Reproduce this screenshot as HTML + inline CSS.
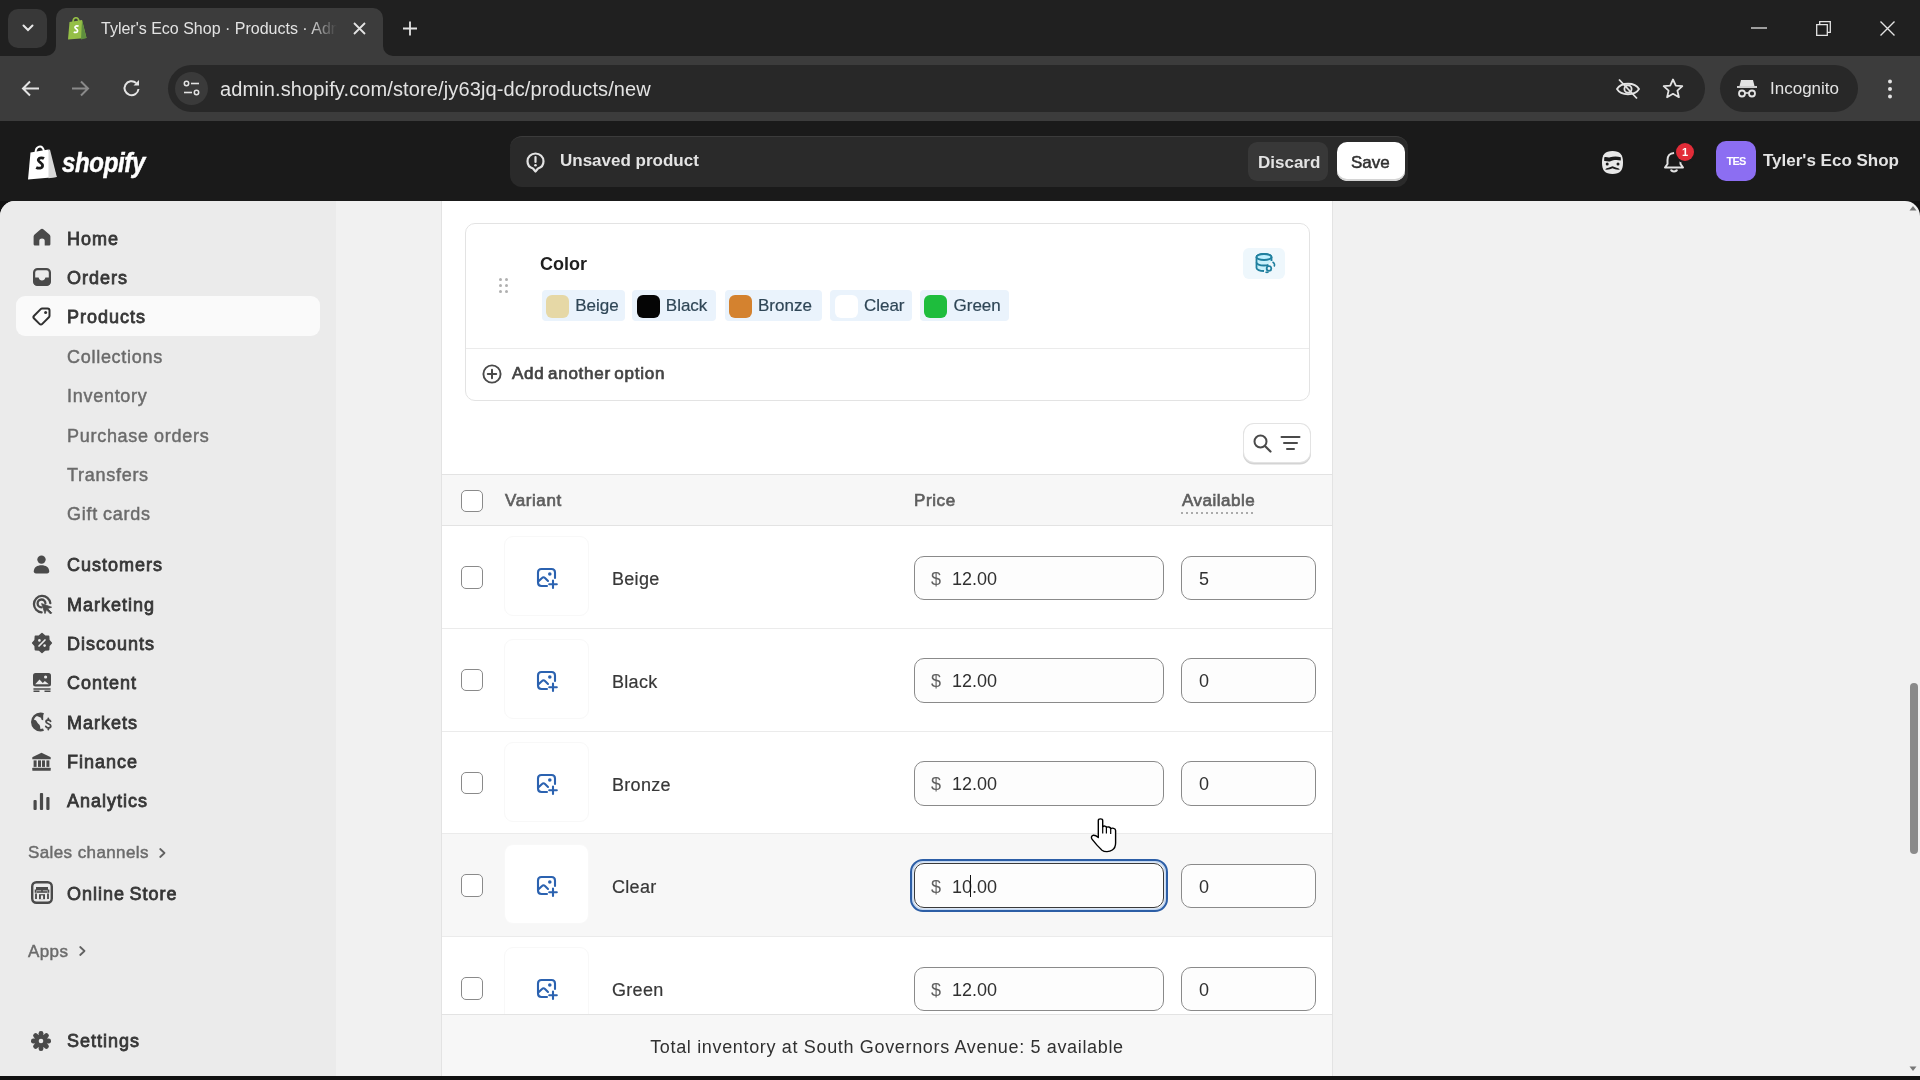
<!DOCTYPE html>
<html><head><meta charset="utf-8">
<style>
*{box-sizing:border-box;margin:0;padding:0}
html,body{width:1920px;height:1080px;overflow:hidden;background:#111;font-family:"Liberation Sans",sans-serif;-webkit-font-smoothing:antialiased}
.a{position:absolute}
#root{position:absolute;left:0;top:0;width:1920px;height:1080px;will-change:transform;overflow:hidden}
svg{position:absolute;overflow:visible}
.wt{position:absolute;color:#e3e3e3;white-space:nowrap}
#tabstrip{left:0;top:0;width:1920px;height:56px;background:#202020}
#toolbar{left:0;top:56px;width:1920px;height:65px;background:#3c3c3c}
#tab{left:56px;top:8px;width:327px;height:48px;background:#3c3c3c;border-radius:10px 10px 0 0}
#omni{left:168px;top:65px;width:1537px;height:47px;background:#282828;border-radius:24px}
#incog{left:1720px;top:65px;width:138px;height:47px;background:#282828;border-radius:24px}
#top{left:0;top:121px;width:1920px;height:80px;background:#1a1a1a}
#unsaved{left:510px;top:136px;width:898px;height:51px;background:#2a2a2a;border-radius:12px;border-top:1.5px solid #3b3b3b}
#body{left:0;top:201px;width:1920px;height:875px;background:#f1f1f1;border-radius:15px 15px 0 0;overflow:hidden}
#side{left:0;top:0;width:336px;height:875px;background:#ebebeb}
.nav{position:absolute;left:67px;font-size:18px;font-weight:400;color:#363636;white-space:nowrap;line-height:20px;letter-spacing:1px;word-spacing:-1.5px;-webkit-text-stroke:0.8px #363636}
.sub{color:#6b6b6b;font-weight:400;letter-spacing:0.72px;word-spacing:-0.5px;-webkit-text-stroke:0.45px #6b6b6b}
.sec{position:absolute;left:28px;font-size:17px;font-weight:400;color:#6b6b6b;white-space:nowrap;line-height:20px;letter-spacing:0.4px;-webkit-text-stroke:0.45px #6b6b6b}
.ico{position:absolute;left:31px;width:22px;height:22px}
#card{left:441px;top:0;width:892px;height:875px;background:#fff;border-left:1px solid #e3e3e3;border-right:1px solid #e3e3e3}
</style></head><body><div id="root">
<!-- ============ CHROME ============ -->
<div id="tabstrip" class="a"></div>
<div class="a" style="left:8px;top:9px;width:39px;height:39px;background:#383838;border-radius:10px"></div>
<svg style="left:20px;top:22px" width="16" height="12"><path d="M3.5 3.5 L8 8 L12.5 3.5" stroke="#e8e8e8" stroke-width="2" fill="none" stroke-linecap="round"/></svg>
<div id="tab" class="a"></div>
<svg style="left:46px;top:46px" width="10" height="10"><path d="M10 0 V10 H0 A10 10 0 0 0 10 0Z" fill="#3c3c3c"/></svg>
<svg style="left:383px;top:46px" width="10" height="10"><path d="M0 0 V10 H10 A10 10 0 0 1 0 0Z" fill="#3c3c3c"/></svg>
<!-- favicon -->
<svg style="left:67px;top:16px" width="21" height="24" viewBox="0 0 21 24"><path d="M2.5 6 L15 4 L19.5 22 L1 23.5 Z" fill="#95bf47"/><path d="M15 4 L19.5 22 L14 23.5 Z" fill="#5e8e3e"/><path d="M6 6 C6 1 11 0 12 5" stroke="#95bf47" stroke-width="1.6" fill="none"/><path d="M11.6 10.3c-.9-.5-2.8-.6-3.6.6-.9 1.4 2.8 2.2 2.6 4.1-.2 1.6-2.4 1.7-3.9 1" stroke="#fff" stroke-width="1.7" fill="none"/></svg>
<div class="wt" style="left:101px;top:18px;font-size:16px;line-height:22px;width:240px;overflow:hidden;letter-spacing:0px;-webkit-mask-image:linear-gradient(90deg,#000 208px,transparent 236px)">Tyler's Eco Shop · Products · Admin</div>
<svg style="left:353px;top:22px" width="13" height="13"><path d="M1 1 L12 12 M12 1 L1 12" stroke="#e3e3e3" stroke-width="1.8"/></svg>
<svg style="left:402px;top:21px" width="16" height="15"><path d="M8 0.5 V14.5 M1 7.5 H15" stroke="#e3e3e3" stroke-width="1.8"/></svg>
<!-- window controls -->
<svg style="left:1751px;top:27px" width="16" height="2"><path d="M0 1 H16" stroke="#e3e3e3" stroke-width="1.3"/></svg>
<svg style="left:1816px;top:21px" width="15" height="15"><path d="M0.7 3.7 H11.3 V14.3 H0.7 Z" stroke="#e3e3e3" stroke-width="1.3" fill="none"/><path d="M3.7 3.7 V0.7 H14.3 V11.3 H11.3" stroke="#e3e3e3" stroke-width="1.3" fill="none"/></svg>
<svg style="left:1880px;top:21px" width="15" height="15"><path d="M0.5 0.5 L14.5 14.5 M14.5 0.5 L0.5 14.5" stroke="#e3e3e3" stroke-width="1.4"/></svg>
<div id="toolbar" class="a"></div>
<!-- nav buttons -->
<svg style="left:21px;top:80px" width="19" height="17"><path d="M18 8.5 H2 M9 1.5 L2 8.5 L9 15.5" stroke="#e3e3e3" stroke-width="2" fill="none"/></svg>
<svg style="left:71px;top:80px" width="19" height="17"><path d="M1 8.5 H17 M10 1.5 L17 8.5 L10 15.5" stroke="#8a8a8a" stroke-width="2" fill="none"/></svg>
<svg style="left:122px;top:79px" width="20" height="19"><path d="M16.5 10 A7 7 0 1 1 14.2 4" stroke="#e3e3e3" stroke-width="2" fill="none"/><path d="M17 1 V6.5 H11.5 Z" fill="#e3e3e3"/></svg>
<div id="omni" class="a"></div>
<div class="a" style="left:175px;top:72px;width:33px;height:33px;border-radius:50%;background:#3a3a3a"></div>
<svg style="left:183px;top:80px" width="18" height="17"><circle cx="3.5" cy="3.5" r="2.2" stroke="#e3e3e3" stroke-width="1.5" fill="none"/><path d="M8 3.5 H16" stroke="#e3e3e3" stroke-width="1.6"/><circle cx="13.5" cy="12.5" r="2.2" stroke="#e3e3e3" stroke-width="1.5" fill="none"/><path d="M1 12.5 H9" stroke="#e3e3e3" stroke-width="1.6"/></svg>
<div class="wt" style="left:220px;top:77px;font-size:20px;line-height:24px;letter-spacing:0.12px">admin.shopify.com/store/jy63jq-dc/products/new</div>
<!-- eye slash -->
<svg style="left:1615px;top:78px" width="26" height="22"><path d="M2 11 C6 4 20 4 24 11 C20 18 6 18 2 11Z" stroke="#e3e3e3" stroke-width="1.8" fill="none"/><circle cx="13" cy="11" r="3.6" stroke="#e3e3e3" stroke-width="1.8" fill="none"/><path d="M4 1.5 L22 20.5" stroke="#e3e3e3" stroke-width="1.8"/></svg>
<svg style="left:1662px;top:78px" width="22" height="21"><path d="M11 1.5 L13.8 7.6 L20.3 8.2 L15.4 12.6 L16.9 19.2 L11 15.8 L5.1 19.2 L6.6 12.6 L1.7 8.2 L8.2 7.6Z" stroke="#e3e3e3" stroke-width="1.8" fill="none" stroke-linejoin="round"/></svg>
<div id="incog" class="a"></div>
<svg style="left:1736px;top:78px" width="22" height="20"><path d="M5 2 L17 2 L18.5 8 H3.5Z" fill="#e3e3e3"/><path d="M1 9 H21" stroke="#e3e3e3" stroke-width="1.8"/><circle cx="6" cy="15.5" r="3" stroke="#e3e3e3" stroke-width="1.8" fill="none"/><circle cx="16" cy="15.5" r="3" stroke="#e3e3e3" stroke-width="1.8" fill="none"/><path d="M9 15 H13" stroke="#e3e3e3" stroke-width="1.6"/></svg>
<div class="wt" style="left:1770px;top:78px;font-size:17px;line-height:22px">Incognito</div>
<svg style="left:1887px;top:79px" width="6" height="20"><circle cx="3" cy="2.5" r="2" fill="#e3e3e3"/><circle cx="3" cy="10" r="2" fill="#e3e3e3"/><circle cx="3" cy="17.5" r="2" fill="#e3e3e3"/></svg>

<!-- ============ SHOPIFY TOP BAR ============ -->
<div id="top" class="a"></div>
<svg style="left:27px;top:144px" width="31" height="36" viewBox="0 0 31 36"><path d="M3.5 8.5 L21.5 5.5 L29.5 33 L1 35.5 Z" fill="#fff"/><path d="M21.5 5.5 L23 5.8 L29.8 33 L21.5 34.2Z" fill="#d9d9d9"/><path d="M8.5 9 C8.5 2 15 0 17 7" stroke="#fff" stroke-width="2" fill="none"/><path d="M17 14.5c-1.2-.8-4.6-1.2-5.6.8-1.2 2.6 4.6 3.4 4.2 6.6-.3 2.6-4 2.8-6.4 1.5" stroke="#1a1a1a" stroke-width="2.8" fill="none"/></svg>
<div class="a" style="left:61.5px;top:144.5px;font-size:27px;font-weight:700;font-style:italic;color:#fff;line-height:36px;transform:scaleX(0.89);transform-origin:0 0;letter-spacing:-0.4px;-webkit-text-stroke:0.5px #fff">shopify</div>
<div id="unsaved" class="a"></div>
<svg style="left:526px;top:152px" width="19" height="21" viewBox="0 0 19 21"><path d="M9.5 1.5 C5 1.5 1.5 4.8 1.5 9.2 C1.5 12.8 3.8 15.5 7 16.5 L9.5 19.5 L12 16.5 C15.2 15.5 17.5 12.8 17.5 9.2 C17.5 4.8 14 1.5 9.5 1.5Z" stroke="#e3e3e3" stroke-width="2.2" fill="none" stroke-linejoin="round"/><path d="M9.5 5 V10" stroke="#e3e3e3" stroke-width="2.2" stroke-linecap="round"/><circle cx="9.5" cy="13.2" r="1.3" fill="#e3e3e3"/></svg>
<div class="wt" style="left:560px;top:151px;font-size:17px;font-weight:700;line-height:20px;color:#e3e3e3">Unsaved product</div>
<div class="a" style="left:1248px;top:142px;width:80px;height:39px;background:#383838;border-radius:9px"></div>
<div class="wt" style="left:1258px;top:153px;font-size:17px;font-weight:700;line-height:20px;color:#e3e3e3">Discard</div>
<div class="a" style="left:1337px;top:142px;width:68px;height:39px;background:#fff;border-radius:10px;box-shadow:0 0 0 2px #2a2a2a, inset 0 -2px 0 #d4d4d4"></div>
<div class="a" style="left:1351px;top:153px;font-size:17px;font-weight:400;line-height:20px;color:#303030;-webkit-text-stroke:0.5px #303030">Save</div>
<!-- incognito face -->
<svg style="left:1601px;top:149.5px" width="23" height="25" viewBox="0 0 23 25"><path d="M11.5 1 C4 1 1 4.5 1 12.5 C1 20.5 4 24 11.5 24 C19 24 22 20.5 22 12.5 C22 4.5 19 1 11.5 1Z" fill="#e8e8e8"/><path d="M3.2 7.5 C5 6.2 7 8 9 7.3 C12 6.3 16 6 19.8 7.3 L19.8 10.5 C16 9.5 12 10 9.5 11.2 C7 12 5 10.5 3.2 11Z" fill="#1a1a1a"/><circle cx="6.2" cy="14" r="1.5" fill="#1a1a1a"/><circle cx="17" cy="14" r="1.5" fill="#1a1a1a"/><path d="M4 19.5 C6 17.5 9 17.5 11.5 16.2 C14 17.5 17 17.5 19 19.5 C16 20 13.5 19 11.5 18.3 C9.5 19 7 20 4 19.5Z" fill="#1a1a1a"/></svg>
<!-- bell -->
<svg style="left:1663px;top:151px" width="22" height="23" viewBox="0 0 22 23"><path d="M11 2 C6.5 2 4.5 5.5 4.5 9 V13 L2 16.5 H20 L17.5 13 V9 C17.5 5.5 15.5 2 11 2Z" stroke="#e3e3e3" stroke-width="2" fill="none" stroke-linejoin="round"/><path d="M8 18.5 C8.5 21 13.5 21 14 18.5" stroke="#e3e3e3" stroke-width="2" fill="none"/></svg>
<div class="a" style="left:1676px;top:143px;width:18px;height:18px;border-radius:50%;background:#e22c38;box-shadow:0 0 0 2px #1a1a1a"></div>
<div class="a" style="left:1676px;top:144px;width:18px;text-align:center;font-size:11px;font-weight:700;color:#fff;line-height:16px">1</div>
<div class="a" style="left:1716px;top:141px;width:40px;height:40px;background:#8c6ef2;border-radius:10px"></div>
<div class="a" style="left:1716px;top:154px;width:40px;text-align:center;font-size:11px;font-weight:700;color:#fff;line-height:14px;letter-spacing:-0.8px">TES</div>
<div class="wt" style="left:1763px;top:151px;font-size:17px;font-weight:700;line-height:20px;color:#e3e3e3">Tyler's Eco Shop</div>

<!-- ============ BODY ============ -->
<div id="body" class="a">
<div id="side" class="a">
<div class="a" style="left:16px;top:95px;width:304px;height:40px;background:#fafafa;border-radius:9px"></div>
<div class="nav" style="top:27.5px">Home</div>
<div class="nav" style="top:66.89px">Orders</div>
<div class="nav" style="top:106.3px">Products</div>
<div class="nav sub" style="top:145.8px">Collections</div>
<div class="nav sub" style="top:185.19px">Inventory</div>
<div class="nav sub" style="top:224.6px">Purchase orders</div>
<div class="nav sub" style="top:264.0px">Transfers</div>
<div class="nav sub" style="top:303.39px">Gift cards</div>
<div class="nav" style="top:354.1px">Customers</div>
<div class="nav" style="top:393.5px">Marketing</div>
<div class="nav" style="top:433.0px">Discounts</div>
<div class="nav" style="top:472.29px">Content</div>
<div class="nav" style="top:511.79px">Markets</div>
<div class="nav" style="top:551.0px">Finance</div>
<div class="nav" style="top:590.1px">Analytics</div>
<div class="nav" style="top:683.2px">Online Store</div>
<div class="nav" style="top:830.29px">Settings</div>
<div class="sec" style="top:642.37px">Sales channels</div>
<div class="sec" style="top:740.67px">Apps</div>
<svg style="left:33px;top:27.0px" width="18" height="18" viewBox="0 0 18 18"><path d="M9 0.8 C8.4 0.8 7.9 1.1 7.4 1.5 L1.6 6.4 C1 6.9 0.6 7.6 0.6 8.5 V16 C0.6 17 1.4 17.6 2.3 17.6 H6.3 V12.6 C6.3 11.3 7.5 10.4 9 10.4 C10.5 10.4 11.7 11.3 11.7 12.6 V17.6 H15.7 C16.6 17.6 17.4 17 17.4 16 V8.5 C17.4 7.6 17 6.9 16.4 6.4 L10.6 1.5 C10.1 1.1 9.6 0.8 9 0.8Z" fill="#4a4a4a"/></svg>
<svg style="left:33px;top:67.0px" width="18" height="18" viewBox="0 0 18 18"><rect x="1.1" y="1.1" width="15.8" height="15.8" rx="3.5" stroke="#4a4a4a" stroke-width="2.2" fill="none"/><path d="M0.5 9.6 H5.6 C6 11.6 7.3 12.6 9 12.6 C10.7 12.6 12 11.6 12.4 9.6 H17.5 V14 C17.5 16.2 16.2 17.5 14 17.5 H4 C1.8 17.5 0.5 16.2 0.5 14Z" fill="#4a4a4a"/></svg>
<svg style="left:32px;top:106.0px" width="19" height="19" viewBox="0 0 19 19"><path d="M10.2 1.5 H15.5 C16.6 1.5 17.5 2.4 17.5 3.5 V8.8 C17.5 9.4 17.3 9.9 16.9 10.3 L10.3 16.9 C9.5 17.7 8.3 17.7 7.5 16.9 L2.1 11.5 C1.3 10.7 1.3 9.5 2.1 8.7 L8.7 2.1 C9.1 1.7 9.6 1.5 10.2 1.5Z" stroke="#303030" stroke-width="2" fill="none"/><circle cx="13.6" cy="5.4" r="1.5" fill="#303030"/></svg>
<svg style="left:33px;top:353.5px" width="17" height="19" viewBox="0 0 17 19"><circle cx="8.5" cy="4.6" r="4.2" fill="#4a4a4a"/><path d="M0.8 16.3 C0.8 12.2 4.2 10.2 8.5 10.2 C12.8 10.2 16.2 12.2 16.2 16.3 C16.2 17.6 15.5 18.5 14 18.5 H3 C1.5 18.5 0.8 17.6 0.8 16.3Z" fill="#4a4a4a"/></svg>
<svg style="left:32px;top:392.5px" width="21" height="21" viewBox="0 0 21 21"><path d="M18.3 9.2 A8.2 8.2 0 1 0 9.6 18.3" stroke="#4a4a4a" stroke-width="2.3" fill="none" stroke-linecap="round"/><path d="M13.4 9.3 A3.9 3.9 0 1 0 9.5 13.3" stroke="#4a4a4a" stroke-width="2.3" fill="none" stroke-linecap="round"/><path d="M9.6 9.6 L19.6 13.2 L15.6 14.6 L19.8 18.8 L18.6 20 L14.4 15.8 L13 19.6Z" fill="#4a4a4a" stroke="#4a4a4a" stroke-width="0.8" stroke-linejoin="round"/></svg>
<svg style="left:31.5px;top:432.0px" width="20" height="20" viewBox="0 0 20 20"><polygon points="10.00,0.70 12.83,3.16 16.58,3.42 16.84,7.17 19.30,10.00 16.84,12.83 16.58,16.58 12.83,16.84 10.00,19.30 7.17,16.84 3.42,16.58 3.16,12.83 0.70,10.00 3.16,7.17 3.42,3.42 7.17,3.16" fill="#4a4a4a" stroke="#4a4a4a" stroke-width="1.6" stroke-linejoin="round"/><path d="M7 13 L13 7" stroke="#ebebeb" stroke-width="1.7" stroke-linecap="round"/><circle cx="7.4" cy="7.4" r="1.3" fill="#ebebeb"/><circle cx="12.6" cy="12.6" r="1.3" fill="#ebebeb"/></svg>
<svg style="left:32px;top:471.0px" width="20" height="20" viewBox="0 0 20 20"><rect x="1" y="1" width="18" height="13.5" rx="2.5" fill="#4a4a4a"/><path d="M3.2 12.2 L7.5 7.6 L10.8 11 L12.8 9 L16.8 12.2Z" fill="#ebebeb"/><circle cx="13.6" cy="5" r="1.6" fill="#ebebeb"/><rect x="1.2" y="16.2" width="17.6" height="1.6" rx="0.8" fill="#4a4a4a"/><path d="M1.5 19.3 H7.5 M12.5 19.3 H18.5" stroke="#4a4a4a" stroke-width="1.4"/></svg>
<svg style="left:31px;top:511.0px" width="22" height="20" viewBox="0 0 22 20"><path d="M12.5 2.3 C11.6 1.9 10.6 1.7 9.5 1.7 C4.9 1.7 1.2 5.4 1.2 10 C1.2 14.6 4.9 18.3 9.5 18.3 C10.6 18.3 11.6 18.1 12.5 17.7" stroke="#4a4a4a" stroke-width="2.4" fill="none"/><path d="M2 8 C4 7 5.5 8.5 6 10 C6.5 11.8 8.5 12 9 14 L9.5 18 C6 18 2.5 15.5 1.8 11Z" fill="#4a4a4a"/><path d="M5 3 C6 4.5 8 4.5 9.5 5.5 C10.5 6.2 10 7.5 11 8 L12.2 8.2 V2.5 C10 1.6 7 1.8 5 3Z" fill="#4a4a4a"/><path d="M19.6 9.3 C19.2 8.4 18.4 8 17.3 8 C16 8 15 8.7 15 9.8 C15 12.2 19.8 11.3 19.8 13.9 C19.8 15.1 18.7 15.8 17.3 15.8 C16.1 15.8 15.2 15.3 14.8 14.4 M17.3 6.3 V8 M17.3 15.8 V17.6" stroke="#4a4a4a" stroke-width="1.8" fill="none" stroke-linecap="round"/></svg>
<svg style="left:32px;top:550.5px" width="19" height="19" viewBox="0 0 19 19"><path d="M9.5 0.8 L18.3 5 C18.6 5.2 18.7 5.5 18.7 5.8 V7.3 H0.3 V5.8 C0.3 5.5 0.4 5.2 0.7 5 Z" fill="#4a4a4a"/><rect x="1.6" y="8.4" width="3" height="6.5" fill="#4a4a4a"/><rect x="6" y="8.4" width="3" height="6.5" fill="#4a4a4a"/><rect x="10" y="8.4" width="3" height="6.5" fill="#4a4a4a"/><rect x="14.4" y="8.4" width="3" height="6.5" fill="#4a4a4a"/><rect x="0.3" y="15.8" width="18.4" height="3" rx="0.5" fill="#4a4a4a"/></svg>
<svg style="left:33px;top:590.5px" width="17" height="18" viewBox="0 0 17 18"><rect x="0.5" y="8" width="3.2" height="10" rx="1" fill="#4a4a4a"/><rect x="6.9" y="1" width="3.2" height="17" rx="1" fill="#4a4a4a"/><rect x="13.3" y="5" width="3.2" height="13" rx="1" fill="#4a4a4a"/></svg>
<svg style="left:31px;top:680.0px" width="22" height="23" viewBox="0 0 22 23"><rect x="1.2" y="1.2" width="19.6" height="20.6" rx="4.2" stroke="#4a4a4a" stroke-width="2.4" fill="none"/><path d="M5 6 H17 V9.5 H5Z" fill="#4a4a4a"/><path d="M4.5 8.5 V11.8 M17.5 8.5 V11.8 M11 8.5 V11" stroke="#4a4a4a" stroke-width="1.6"/><path d="M5.5 11 H16.5" stroke="#4a4a4a" stroke-width="1.6"/><path d="M5 12.5 V18 M17 12.5 V18" stroke="#4a4a4a" stroke-width="1.8"/><rect x="8" y="13.2" width="6" height="5" fill="#4a4a4a"/><rect x="9.9" y="14.4" width="2.2" height="3.8" fill="#ebebeb"/></svg>
<svg style="left:31px;top:829.7px" width="20" height="20" viewBox="0 0 20 20"><rect x="7.6" y="0" width="4.8" height="20" rx="2.2" fill="#4a4a4a" transform="rotate(0 10 10)"/><rect x="7.6" y="0" width="4.8" height="20" rx="2.2" fill="#4a4a4a" transform="rotate(45 10 10)"/><rect x="7.6" y="0" width="4.8" height="20" rx="2.2" fill="#4a4a4a" transform="rotate(90 10 10)"/><rect x="7.6" y="0" width="4.8" height="20" rx="2.2" fill="#4a4a4a" transform="rotate(135 10 10)"/><circle cx="10" cy="10" r="6.5" fill="#4a4a4a"/><circle cx="10" cy="10" r="2.3" fill="#ebebeb"/></svg>
<svg style="left:159px;top:646.5px" width="7" height="10"><path d="M1.2 1 L5.5 5 L1.2 9" stroke="#616161" stroke-width="1.8" fill="none" stroke-linecap="round" stroke-linejoin="round"/></svg>
<svg style="left:79px;top:745.2px" width="7" height="10"><path d="M1.2 1 L5.5 5 L1.2 9" stroke="#616161" stroke-width="1.8" fill="none" stroke-linecap="round" stroke-linejoin="round"/></svg>
</div>
<div id="card" class="a"></div>
<div class="a" style="left:465px;top:22px;width:845px;height:178px;border:1px solid #e3e3e3;border-radius:10px;background:#fff"></div>
<div class="a" style="left:466px;top:147px;width:843px;height:1px;background:#ebebeb"></div>
<div class="a" style="left:498.5px;top:76.5px;width:3px;height:3px;border-radius:50%;background:#b0b0b0"></div>
<div class="a" style="left:498.5px;top:82.89999999999998px;width:3px;height:3px;border-radius:50%;background:#b0b0b0"></div>
<div class="a" style="left:498.5px;top:89.10000000000002px;width:3px;height:3px;border-radius:50%;background:#b0b0b0"></div>
<div class="a" style="left:504.5px;top:76.5px;width:3px;height:3px;border-radius:50%;background:#b0b0b0"></div>
<div class="a" style="left:504.5px;top:82.89999999999998px;width:3px;height:3px;border-radius:50%;background:#b0b0b0"></div>
<div class="a" style="left:504.5px;top:89.10000000000002px;width:3px;height:3px;border-radius:50%;background:#b0b0b0"></div>
<div class="a" style="left:540px;top:52.8px;font-size:18px;font-weight:700;color:#1f1f1f;line-height:20px">Color</div>
<div class="a" style="left:541.7px;top:89px;width:83.6px;height:31px;background:#eaf3fc;border-radius:4px"></div>
<div class="a" style="left:546.0px;top:93.8px;width:23px;height:23px;background:#e6d8a6;border-radius:6px"></div>
<div class="a" style="left:575.2px;top:95.17px;font-size:17px;color:#2f4656;line-height:20px;-webkit-text-stroke:0.2px #2f4656">Beige</div>
<div class="a" style="left:632.3px;top:89px;width:83.7px;height:31px;background:#eaf3fc;border-radius:4px"></div>
<div class="a" style="left:636.6px;top:93.8px;width:23px;height:23px;background:#050505;border-radius:6px"></div>
<div class="a" style="left:665.8px;top:95.17px;font-size:17px;color:#2f4656;line-height:20px;-webkit-text-stroke:0.2px #2f4656">Black</div>
<div class="a" style="left:724.5px;top:89px;width:97.5px;height:31px;background:#eaf3fc;border-radius:4px"></div>
<div class="a" style="left:728.8px;top:93.8px;width:23px;height:23px;background:#d4822f;border-radius:6px"></div>
<div class="a" style="left:758.0px;top:95.17px;font-size:17px;color:#2f4656;line-height:20px;-webkit-text-stroke:0.2px #2f4656">Bronze</div>
<div class="a" style="left:830.4px;top:89px;width:81.3px;height:31px;background:#eaf3fc;border-radius:4px"></div>
<div class="a" style="left:834.7px;top:93.8px;width:23px;height:23px;background:#ffffff;border-radius:6px"></div>
<div class="a" style="left:863.9px;top:95.17px;font-size:17px;color:#2f4656;line-height:20px;-webkit-text-stroke:0.2px #2f4656">Clear</div>
<div class="a" style="left:920px;top:89px;width:88.5px;height:31px;background:#eaf3fc;border-radius:4px"></div>
<div class="a" style="left:924.3px;top:93.8px;width:23px;height:23px;background:#1ebd3d;border-radius:6px"></div>
<div class="a" style="left:953.5px;top:95.17px;font-size:17px;color:#2f4656;line-height:20px;-webkit-text-stroke:0.2px #2f4656">Green</div>
<div class="a" style="left:1243px;top:47px;width:42px;height:31px;background:#eef7fc;border-radius:6px"></div>
<svg style="left:1255px;top:52px" width="22" height="21" viewBox="0 0 22 21"><ellipse cx="9" cy="4" rx="7.5" ry="3" stroke="#1f7f9e" stroke-width="1.8" fill="#bff0ff"/><path d="M1.5 4 V15 C1.5 16.5 4.5 18 9 18 L12 17 L13 12 L16.5 8 V4Z" fill="#c8f1fb"/><ellipse cx="9" cy="4" rx="7.5" ry="3" stroke="#1f7f9e" stroke-width="1.8" fill="#bff0ff"/><path d="M1.5 4 V15 C1.5 16.5 4.5 18 9 18" stroke="#1f7f9e" stroke-width="1.8" fill="none"/><path d="M1.5 9.5 C1.5 11 4.5 12.5 9 12.5 C11 12.5 12.5 12.2 13.5 11.8" stroke="#1f7f9e" stroke-width="1.8" fill="none"/><path d="M16.5 4 V8" stroke="#1f7f9e" stroke-width="1.8"/><circle cx="14" cy="15.5" r="2.3" stroke="#1f7f9e" stroke-width="1.8" fill="none"/><path d="M17.5 9 C19.5 10 20 12 19 13.5 M10.5 19 C11.5 19.5 12.5 19.5 13.5 19" stroke="#1f7f9e" stroke-width="1.6" fill="none"/></svg>
<svg style="left:481.5px;top:163px" width="20" height="20"><circle cx="10" cy="10" r="8.6" stroke="#4a4a4a" stroke-width="1.9" fill="none"/><path d="M10 5.8 V14.2 M5.8 10 H14.2" stroke="#4a4a4a" stroke-width="2" stroke-linecap="round"/></svg>
<div class="a" style="left:512px;top:162.97px;font-size:17px;font-weight:400;color:#444;line-height:20px;letter-spacing:0.75px;word-spacing:-2px;-webkit-text-stroke:0.7px #444">Add another option</div>
<div class="a" style="left:1243.5px;top:223px;width:66px;height:38px;border-radius:10px;background:#fff;box-shadow:0 0 0 1px #e3e3e3, 0 1.5px 0 1px #d4d4d4"></div>
<svg style="left:1253px;top:233px" width="19" height="19"><circle cx="7.5" cy="7.5" r="6" stroke="#4a4a4a" stroke-width="2" fill="none"/><path d="M12 12 L17.5 17.5" stroke="#4a4a4a" stroke-width="2.2" stroke-linecap="round"/></svg>
<svg style="left:1280px;top:234px" width="21" height="16"><path d="M1.5 2 H19.5 M4 8 H17 M7 14 H14" stroke="#4a4a4a" stroke-width="2" stroke-linecap="round"/></svg>
<div class="a" style="left:442px;top:273px;width:890px;height:52px;background:#f7f7f7;border-top:1px solid #e3e3e3;border-bottom:1px solid #e3e3e3"></div>
<div class="a" style="left:461px;top:288.5px;width:22px;height:22px;border:1.5px solid #8a8a8a;border-radius:5px;background:#fff"></div>
<div class="a" style="left:505px;top:290px;font-size:17px;font-weight:400;color:#5e5e5e;line-height:20px;letter-spacing:0.6px;-webkit-text-stroke:0.65px #5e5e5e">Variant</div>
<div class="a" style="left:914px;top:290px;font-size:17px;font-weight:400;color:#5e5e5e;line-height:20px;letter-spacing:0.6px;-webkit-text-stroke:0.65px #5e5e5e">Price</div>
<div class="a" style="left:1182px;top:290px;font-size:17px;font-weight:400;color:#5e5e5e;line-height:20px;letter-spacing:0.5px;-webkit-text-stroke:0.65px #5e5e5e">Available</div>
<div class="a" style="left:1181px;top:311px;width:74px;height:2px;background-image:linear-gradient(90deg,#aaa 50%,transparent 50%);background-size:5px 2px"></div>
<div class="a" style="left:442px;top:324.5px;width:890px;height:102.75px;background:#fff"></div><div class="a" style="left:442px;top:426.75px;width:890px;height:1px;background:#ebebeb;z-index:2"></div>
<div class="a" style="left:461px;top:365.0px;width:22px;height:22.5px;border:1.5px solid #8a8a8a;border-radius:5px;background:#fff"></div>
<div class="a" style="left:504px;top:335.0px;width:85px;height:80px;border:1px solid #f8f8f8;border-radius:9px;background:#fff"></div>
<svg style="left:536px;top:366.0px" width="22" height="22" viewBox="0 0 22 22"><path d="M11 19 H5.5 C3.3 19 2 17.7 2 15.5 V5.5 C2 3.3 3.3 2 5.5 2 H15.5 C17.7 2 19 3.3 19 5.5 V11" stroke="#2b62b0" stroke-width="2.1" fill="none" stroke-linecap="round"/><path d="M2.3 14.5 L6 11 C7 10 8 10 9 11 L12 14" stroke="#2b62b0" stroke-width="2.1" fill="none" stroke-linecap="round"/><circle cx="13.8" cy="7" r="1.8" fill="#2b62b0"/><path d="M17 13.5 V21 M13.2 17.2 H20.8" stroke="#2b62b0" stroke-width="2.1" stroke-linecap="round"/></svg>
<div class="a" style="left:612px;top:368.0px;font-size:18px;color:#383838;line-height:20px;letter-spacing:0.3px;-webkit-text-stroke:0.2px #383838">Beige</div>
<div class="a" style="left:913.6px;top:354.5px;width:250px;height:44.5px;border:1px solid #8a8a8a;border-radius:10px;background:#fdfdfd"></div>
<div class="a" style="left:931px;top:367.5px;font-size:18px;color:#616161;line-height:20px">$</div>
<div class="a" style="left:952px;top:367.5px;font-size:18px;color:#303030;line-height:20px">12.00</div>
<div class="a" style="left:1180.6px;top:354.5px;width:135px;height:44.5px;border:1px solid #8a8a8a;border-radius:10px;background:#fdfdfd"></div>
<div class="a" style="left:1199px;top:367.5px;font-size:18px;color:#303030;line-height:20px">5</div>
<div class="a" style="left:442px;top:427.25px;width:890px;height:102.75px;background:#fff"></div><div class="a" style="left:442px;top:529.5px;width:890px;height:1px;background:#ebebeb;z-index:2"></div>
<div class="a" style="left:461px;top:467.75px;width:22px;height:22.5px;border:1.5px solid #8a8a8a;border-radius:5px;background:#fff"></div>
<div class="a" style="left:504px;top:437.75px;width:85px;height:80px;border:1px solid #f8f8f8;border-radius:9px;background:#fff"></div>
<svg style="left:536px;top:468.75px" width="22" height="22" viewBox="0 0 22 22"><path d="M11 19 H5.5 C3.3 19 2 17.7 2 15.5 V5.5 C2 3.3 3.3 2 5.5 2 H15.5 C17.7 2 19 3.3 19 5.5 V11" stroke="#2b62b0" stroke-width="2.1" fill="none" stroke-linecap="round"/><path d="M2.3 14.5 L6 11 C7 10 8 10 9 11 L12 14" stroke="#2b62b0" stroke-width="2.1" fill="none" stroke-linecap="round"/><circle cx="13.8" cy="7" r="1.8" fill="#2b62b0"/><path d="M17 13.5 V21 M13.2 17.2 H20.8" stroke="#2b62b0" stroke-width="2.1" stroke-linecap="round"/></svg>
<div class="a" style="left:612px;top:470.75px;font-size:18px;color:#383838;line-height:20px;letter-spacing:0.3px;-webkit-text-stroke:0.2px #383838">Black</div>
<div class="a" style="left:913.6px;top:457.25px;width:250px;height:44.5px;border:1px solid #8a8a8a;border-radius:10px;background:#fdfdfd"></div>
<div class="a" style="left:931px;top:470.25px;font-size:18px;color:#616161;line-height:20px">$</div>
<div class="a" style="left:952px;top:470.25px;font-size:18px;color:#303030;line-height:20px">12.00</div>
<div class="a" style="left:1180.6px;top:457.25px;width:135px;height:44.5px;border:1px solid #8a8a8a;border-radius:10px;background:#fdfdfd"></div>
<div class="a" style="left:1199px;top:470.25px;font-size:18px;color:#303030;line-height:20px">0</div>
<div class="a" style="left:442px;top:530.0px;width:890px;height:102.75px;background:#fff"></div><div class="a" style="left:442px;top:632.25px;width:890px;height:1px;background:#ebebeb;z-index:2"></div>
<div class="a" style="left:461px;top:570.5px;width:22px;height:22.5px;border:1.5px solid #8a8a8a;border-radius:5px;background:#fff"></div>
<div class="a" style="left:504px;top:540.5px;width:85px;height:80px;border:1px solid #f8f8f8;border-radius:9px;background:#fff"></div>
<svg style="left:536px;top:571.5px" width="22" height="22" viewBox="0 0 22 22"><path d="M11 19 H5.5 C3.3 19 2 17.7 2 15.5 V5.5 C2 3.3 3.3 2 5.5 2 H15.5 C17.7 2 19 3.3 19 5.5 V11" stroke="#2b62b0" stroke-width="2.1" fill="none" stroke-linecap="round"/><path d="M2.3 14.5 L6 11 C7 10 8 10 9 11 L12 14" stroke="#2b62b0" stroke-width="2.1" fill="none" stroke-linecap="round"/><circle cx="13.8" cy="7" r="1.8" fill="#2b62b0"/><path d="M17 13.5 V21 M13.2 17.2 H20.8" stroke="#2b62b0" stroke-width="2.1" stroke-linecap="round"/></svg>
<div class="a" style="left:612px;top:573.5px;font-size:18px;color:#383838;line-height:20px;letter-spacing:0.3px;-webkit-text-stroke:0.2px #383838">Bronze</div>
<div class="a" style="left:913.6px;top:560.0px;width:250px;height:44.5px;border:1px solid #8a8a8a;border-radius:10px;background:#fdfdfd"></div>
<div class="a" style="left:931px;top:573.0px;font-size:18px;color:#616161;line-height:20px">$</div>
<div class="a" style="left:952px;top:573.0px;font-size:18px;color:#303030;line-height:20px">12.00</div>
<div class="a" style="left:1180.6px;top:560.0px;width:135px;height:44.5px;border:1px solid #8a8a8a;border-radius:10px;background:#fdfdfd"></div>
<div class="a" style="left:1199px;top:573.0px;font-size:18px;color:#303030;line-height:20px">0</div>
<div class="a" style="left:442px;top:632.75px;width:890px;height:102.75px;background:#f7f7f7"></div><div class="a" style="left:442px;top:735.0px;width:890px;height:1px;background:#ebebeb;z-index:2"></div>
<div class="a" style="left:461px;top:673.25px;width:22px;height:22.5px;border:1.5px solid #8a8a8a;border-radius:5px;background:#fff"></div>
<div class="a" style="left:504px;top:643.25px;width:85px;height:80px;border:1px solid #f8f8f8;border-radius:9px;background:#fff"></div>
<svg style="left:536px;top:674.25px" width="22" height="22" viewBox="0 0 22 22"><path d="M11 19 H5.5 C3.3 19 2 17.7 2 15.5 V5.5 C2 3.3 3.3 2 5.5 2 H15.5 C17.7 2 19 3.3 19 5.5 V11" stroke="#2b62b0" stroke-width="2.1" fill="none" stroke-linecap="round"/><path d="M2.3 14.5 L6 11 C7 10 8 10 9 11 L12 14" stroke="#2b62b0" stroke-width="2.1" fill="none" stroke-linecap="round"/><circle cx="13.8" cy="7" r="1.8" fill="#2b62b0"/><path d="M17 13.5 V21 M13.2 17.2 H20.8" stroke="#2b62b0" stroke-width="2.1" stroke-linecap="round"/></svg>
<div class="a" style="left:612px;top:676.25px;font-size:18px;color:#383838;line-height:20px;letter-spacing:0.3px;-webkit-text-stroke:0.2px #383838">Clear</div>
<div class="a" style="left:909.5px;top:657.75px;width:258px;height:53px;border:2.5px solid #2c5ea6;border-radius:13px;box-shadow:inset 0 0 0 1.5px #c4d8f2"></div>
<div class="a" style="left:913.6px;top:662.25px;width:250px;height:44.5px;border:1px solid #3a3a3a;border-radius:10px;background:#fdfdfd"></div>
<div class="a" style="left:931px;top:675.75px;font-size:18px;color:#616161;line-height:20px">$</div>
<div class="a" style="left:952px;top:675.75px;font-size:18px;color:#303030;line-height:20px">10.00</div>
<div class="a" style="left:1180.6px;top:662.75px;width:135px;height:44.5px;border:1px solid #8a8a8a;border-radius:10px;background:#fdfdfd"></div>
<div class="a" style="left:1199px;top:675.75px;font-size:18px;color:#303030;line-height:20px">0</div>
<div class="a" style="left:969.6px;top:673.5px;width:1.5px;height:22.5px;background:#111"></div>
<div class="a" style="left:442px;top:735.5px;width:890px;height:102.75px;background:#fff"></div>
<div class="a" style="left:461px;top:776.0px;width:22px;height:22.5px;border:1.5px solid #8a8a8a;border-radius:5px;background:#fff"></div>
<div class="a" style="left:504px;top:746.0px;width:85px;height:80px;border:1px solid #f8f8f8;border-radius:9px;background:#fff"></div>
<svg style="left:536px;top:777.0px" width="22" height="22" viewBox="0 0 22 22"><path d="M11 19 H5.5 C3.3 19 2 17.7 2 15.5 V5.5 C2 3.3 3.3 2 5.5 2 H15.5 C17.7 2 19 3.3 19 5.5 V11" stroke="#2b62b0" stroke-width="2.1" fill="none" stroke-linecap="round"/><path d="M2.3 14.5 L6 11 C7 10 8 10 9 11 L12 14" stroke="#2b62b0" stroke-width="2.1" fill="none" stroke-linecap="round"/><circle cx="13.8" cy="7" r="1.8" fill="#2b62b0"/><path d="M17 13.5 V21 M13.2 17.2 H20.8" stroke="#2b62b0" stroke-width="2.1" stroke-linecap="round"/></svg>
<div class="a" style="left:612px;top:779.0px;font-size:18px;color:#383838;line-height:20px;letter-spacing:0.3px;-webkit-text-stroke:0.2px #383838">Green</div>
<div class="a" style="left:913.6px;top:765.5px;width:250px;height:44.5px;border:1px solid #8a8a8a;border-radius:10px;background:#fdfdfd"></div>
<div class="a" style="left:931px;top:778.5px;font-size:18px;color:#616161;line-height:20px">$</div>
<div class="a" style="left:952px;top:778.5px;font-size:18px;color:#303030;line-height:20px">12.00</div>
<div class="a" style="left:1180.6px;top:765.5px;width:135px;height:44.5px;border:1px solid #8a8a8a;border-radius:10px;background:#fdfdfd"></div>
<div class="a" style="left:1199px;top:778.5px;font-size:18px;color:#303030;line-height:20px">0</div>
<div class="a" style="left:442px;top:813px;width:890px;height:62px;background:#f7f7f7;border-top:1px solid #e3e3e3"></div>
<div class="a" style="left:442px;width:890px;text-align:center;top:835.89px;font-size:18px;color:#303030;line-height:20px;letter-spacing:0.66px">Total inventory at South Governors Avenue: 5 available</div>
<div class="a" style="left:1909.5px;top:482.4px;width:8px;height:171px;border-radius:4px;background:#8a8a8a"></div>
<svg style="left:1909px;top:4px" width="8" height="6"><path d="M0.5 5.5 L4 1 L7.5 5.5Z" fill="#777"/></svg>
<svg style="left:1909px;top:865px" width="8" height="6"><path d="M0.5 0.5 L4 5 L7.5 0.5Z" fill="#777"/></svg>
<svg style="left:1080px;top:609px;z-index:10" width="50" height="50" viewBox="0 0 50 50"><path d="M18.3 27.5 V10.5 C18.3 8.3 22.7 8.3 22.7 10.5 V16.8 C23.8 15.6 26.1 15.9 26.4 17.4 C27.6 16.4 30.4 16.9 30.7 18.6 C32 17.7 35.6 18.3 35.6 20.6 V33 C35.6 36.2 34.2 38.8 32.3 40 C29.4 42 24.6 42.2 22 40.2 C19 37.5 14.5 32.5 12 29.2 C10.9 27.7 11.4 25.6 13.4 25.3 C15.1 25.1 17 26.4 18.3 27.5 Z" fill="#fff" stroke="#000" stroke-width="1.4" stroke-linejoin="round"/><path d="M22.7 16.8 V23.5 M26.4 17.4 V23.5 M30.7 18.6 V24" stroke="#000" stroke-width="1.2"/></svg>
</div>
</div></body></html>
